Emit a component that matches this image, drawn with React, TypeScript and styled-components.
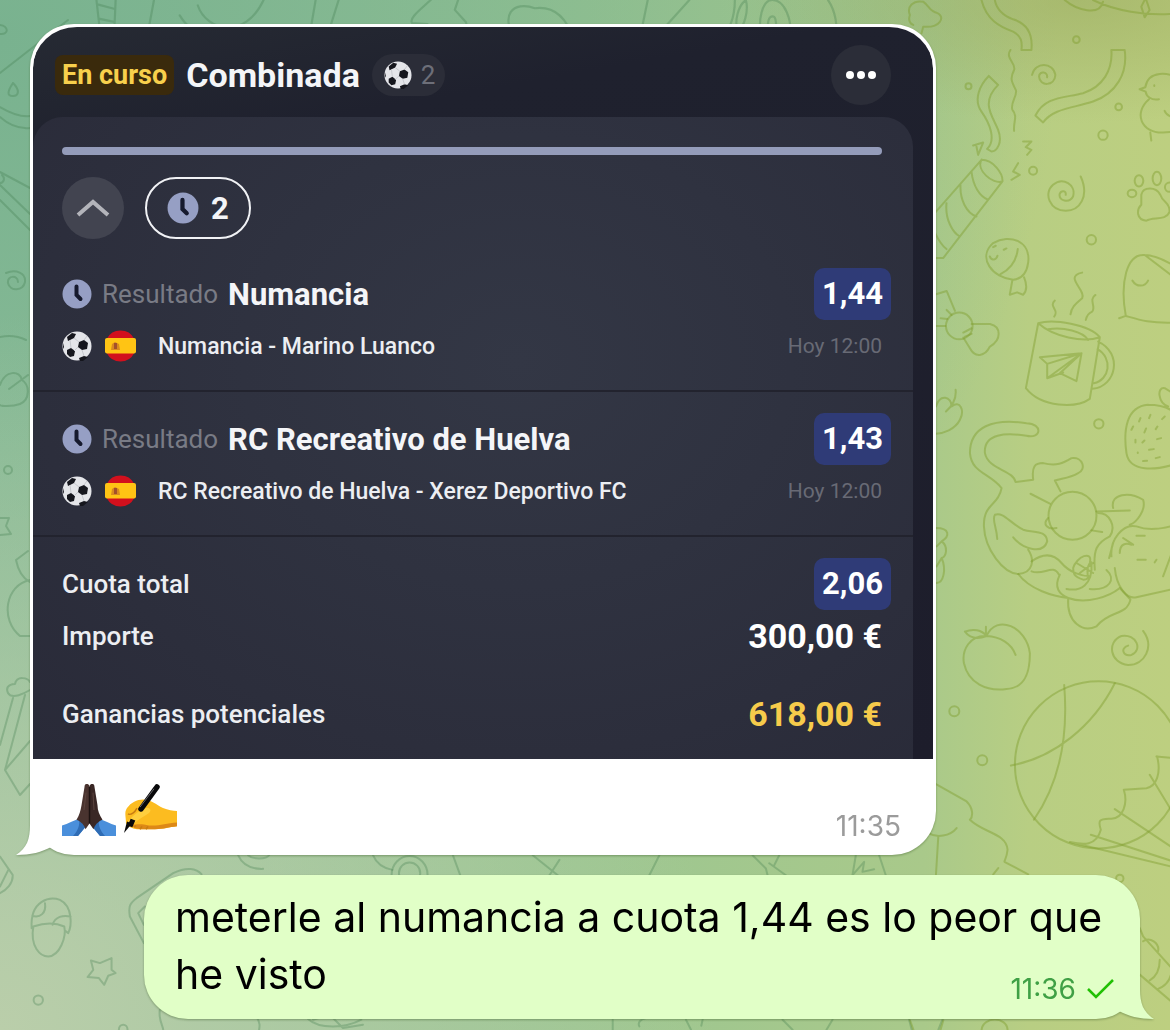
import React from "react";
import styled, { createGlobalStyle } from "styled-components";

const GlobalStyle = createGlobalStyle`
  *, *::before, *::after { box-sizing: border-box; }
  body { margin: 0; font-family: Inter, "Liberation Sans", sans-serif; }
  p, h2, ul, dl, dd { margin: 0; padding: 0; }
  button { border: 0; padding: 0; font: inherit; color: inherit; cursor: pointer; }
`;

const Chat = styled.main`
  position: relative;
  min-height: 100vh;
  overflow: hidden;
  padding: 24px 30px 11px;
  display: flex;
  flex-direction: column;
  gap: 20px;
  background:
    radial-gradient(ellipse 30% 12% at 92% 0%, rgba(150, 165, 90, 0.5) 0%, rgba(150, 165, 90, 0) 100%),
    radial-gradient(circle at 0% 100%, rgba(186, 206, 170, 1) 0%, rgba(186, 206, 170, 0) 46%),
    radial-gradient(ellipse at 0% 4%, #79b28f 0%, rgba(121, 178, 143, 0) 64%),
    linear-gradient(90deg, #93c19c 0%, #9cc691 50%, #a9c98a 79%, #b8ce83 88%, #bdcf80 100%);
`;

const Wallpaper = styled.svg`
  position: absolute;
  inset: 0;
  width: 100%;
  height: 100%;
  fill: none;
  stroke: #3f7a4c;
  stroke-opacity: 0.3;
  stroke-linecap: round;
  stroke-linejoin: round;
`;

const Bubble = styled.article<{ $own?: boolean }>`
  position: relative;
  border-radius: 44px;
  background: ${(p) => (p.$own ? "#e1ffc7" : "#ffffff")};
  margin: ${(p) => (p.$own ? "0 0 0 114px" : "0 204px 0 0")};
  filter: drop-shadow(0 1px 1px rgba(60, 90, 40, 0.45));
`;

const Tail = styled.svg<{ $own?: boolean }>`
  position: absolute;
  bottom: 0;
  ${(p) => (p.$own ? "right: -14px; transform: scaleX(-1);" : "left: -14px;")}
  width: 44px;
  height: 44px;
  fill: ${(p) => (p.$own ? "#e1ffc7" : "#ffffff")};
`;

const Slip = styled.section`
  margin: 0 3px;
  border-top: 3px solid transparent;
  background: linear-gradient(170deg, #262a33 0%, #1f212e 16%, #1d1d2b 100%) padding-box;
  border-radius: 44px 44px 0 0;
  overflow: hidden;
  color: #f4f5f8;
  font-family: Roboto, "Liberation Sans", sans-serif;
`;

const SlipHeader = styled.header`
  height: 90px;
  padding: 6px 42px 0 22px;
  display: flex;
  align-items: center;
`;

const Status = styled.span`
  padding: 0 7px;
  height: 40px;
  line-height: 40px;
  border-radius: 8px;
  background: #3a2a0c;
  color: #f8d04c;
  font-size: 27px;
  font-weight: 700;
`;

const Title = styled.h2`
  margin-left: 12px;
  font-size: 34px;
  line-height: 40px;
  font-weight: 700;
`;

const SportTag = styled.span`
  margin-left: 12px;
  height: 42px;
  padding: 0 10px 0 12px;
  display: flex;
  align-items: center;
  gap: 9px;
  border-radius: 21px;
  background: #2b2d38;
  color: #6d6f79;
  font-size: 26px;
`;

const RoundButton = styled.button<{ $size: number; $tone: string }>`
  width: ${(p) => p.$size}px;
  height: ${(p) => p.$size}px;
  flex: none;
  border-radius: 50%;
  display: grid;
  place-items: center;
  background: ${(p) => p.$tone};
`;

const MoreButton = styled(RoundButton)`
  margin-left: auto;
`;

const Panel = styled.div`
  margin-right: 20px;
  padding: 30px 0 19px;
  border-radius: 30px 30px 0 0;
  background: radial-gradient(ellipse at 55% 38%, #333745 0%, #2f3240 40%, #292a38 100%);
`;

const Progress = styled.div`
  height: 8px;
  margin: 0 31px 22px 29px;
  border-radius: 4px;
  background: #949cba;
`;

const Controls = styled.div`
  display: flex;
  gap: 21px;
  padding-left: 29px;
  margin-bottom: 8px;
`;

const PendingPill = styled.button`
  width: 106px;
  height: 62px;
  border-radius: 31px;
  border: 2px solid #f1f2f5;
  background: transparent;
  display: flex;
  align-items: center;
  justify-content: center;
  gap: 12px;
  font-size: 31px;
  font-weight: 700;
`;

const Legs = styled.ul`
  list-style: none;
`;

const Leg = styled.li`
  padding: 21px 22px 18px 29px;
  border-bottom: 2px solid #22232e;
`;

const Row = styled.div`
  height: 52px;
  display: flex;
  align-items: center;
`;

const Market = styled.span`
  margin: 0 10px;
  color: #797b85;
  font-size: 26px;
`;

const Pick = styled.span`
  font-size: 31px;
  font-weight: 700;
`;

const OddsBox = styled.span`
  margin-left: auto;
  height: 52px;
  line-height: 52px;
  padding: 0 8px;
  border-radius: 10px;
  background: #2f3b77;
  color: #ffffff;
  font-size: 31px;
  font-weight: 700;
`;

const Flag = styled.svg`
  margin: 0 22px 0 13px;
`;

const Fixture = styled.span`
  color: #eceef2;
  font-size: 23px;
  font-weight: 500;
`;

const Kickoff = styled.time`
  margin: 0 9px 0 auto;
  color: #686a75;
  font-size: 21px;
`;

const Totals = styled.dl`
  padding: 21px 22px 0 29px;
`;

const TotalRow = styled(Row)<{ $apart?: boolean }>`
  margin-top: ${(p) => (p.$apart ? 26 : 0)}px;
`;

const Label = styled.dt`
  color: #eceef2;
  font-size: 26px;
  font-weight: 500;
`;

const Figure = styled.dd`
  margin-left: auto;
  display: flex;
`;

const Amount = styled.span<{ $gold?: boolean }>`
  margin-right: 9px;
  font-size: 34px;
  font-weight: 700;
  color: ${(p) => (p.$gold ? "#f6cb4b" : "#ffffff")};
`;

const Caption = styled.div`
  height: 96px;
  padding: 0 35px 15px 32px;
  display: flex;
  justify-content: space-between;
  align-items: flex-end;
`;

const Emojis = styled.div`
  display: flex;
  gap: 7px;
  padding-bottom: 4px;
`;

const Meta = styled.div<{ $own?: boolean }>`
  display: flex;
  align-items: center;
  gap: 11px;
  font-size: 28px;
  line-height: 28px;
  color: ${(p) => (p.$own ? "#3fa045" : "#9b9b9b")};
`;

const Message = styled.div`
  display: flow-root;
  padding: 14px 26px 16px 31px;
  font-size: 41px;
  line-height: 57px;
  color: #000000;

  & > ${Meta} {
    float: right;
    margin-top: 29px;
  }
`;

const Ball = ({ size = 30 }: { size?: number }) => (
  <svg width={size} height={size} viewBox="0 0 30 30" aria-hidden="true">
    <circle cx="15" cy="15" r="14.5" fill="#e4e5e9" />
    <g fill="#15161d">
      <path d="M17 11l5-2 4 3-1 6-5 1-4-3z" />
      <path d="M5 19l4-2 4 3-1 5-4 1-3-3z" />
      <path d="M5 6l5-4 4 1-2 4-6 3z" />
      <path d="M17 27l5-2 4 1-5 4h-3z" />
      <path d="M1 12l1 4-1 2z" />
    </g>
    <path d="M12 7l5 4M16 16l-4 4M8 9l1 8M20 19l2 6M22 9l3-4" stroke="#c6c8ce" fill="none" />
  </svg>
);

const Clock = ({ size = 30 }: { size?: number }) => (
  <svg width={size} height={size} viewBox="0 0 30 30" aria-hidden="true">
    <circle cx="15" cy="15" r="14.5" fill="#969fc4" />
    <path d="M14.500 7.500v8.500l4 4" stroke="#161a2e" strokeWidth="4" strokeLinecap="round" fill="none" />
  </svg>
);

const SpainFlag = () => (
  <Flag width="31" height="32" viewBox="0 0 31 32" role="img" aria-label="España">
    <path d="M1.700 9a15.500 15.500 0 0 1 27.600 0z" fill="#d2101d" />
    <path d="M1.700 23a15.500 15.500 0 0 0 27.600 0z" fill="#d2101d" />
    <rect x="0" y="8" width="31" height="15.500" rx="2" fill="#ffc414" />
    <path d="M7 14l3-2 4 2 1 6H6z" fill="#d98a1e" />
    <path d="M9 13h3v6H9z" fill="#a3502a" />
  </Flag>
);

const PrayingHands = () => (
  <svg width="54" height="52" viewBox="0 0 54 54" preserveAspectRatio="none" role="img" aria-label="Manos juntas">
    <path d="M0 43c6-2 12-5 17-7l7 8-8 10H0z" fill="#4a8fdb" />
    <path d="M54 43c-6-2-12-5-17-7l-7 8 8 10h16z" fill="#4a8fdb" />
    <path d="M17 36l7 8-8 10h-5c5-6 7-11 6-18zM37 36l-7 8 8 10h5c-5-6-7-11-6-18z" fill="#2f6cb4" />
    <path d="M27.500 2c-1-3-5-3-5 1l-3 19c-1 6-2 10-5 15 5 2 8 6 9 10l4-6z" fill="#49332f" />
    <path d="M27.500 2c1-3 5-3 5 1l3 19c0 6 2 10 5 15-5 2-8 6-9 10l-4-6z" fill="#3a2725" />
    <path d="M27.500 3v38" stroke="#1d1211" strokeWidth="1.500" />
    <path d="M24 9l-2 18M31 9l1 18" stroke="#5c443e" fill="none" />
  </svg>
);

const WritingHand = () => (
  <svg width="54" height="52" viewBox="0 0 54 54" preserveAspectRatio="none" role="img" aria-label="Mano escribiendo">
    <path d="M3 41c0-8-2-11 1-16 4-6 10-9 16-9 8 0 13 5 20 9 5 2 10 3 14 3v16c-8 1-12 3-22 3H17c-7 0-11-2-14-6z" fill="#fcbc20" />
    <path d="M9 43c3 4 9 4 14 4h9c9 0 13-2 22-3v-4c-11 1-19 4-28 3-6-1-11-2-17 0z" fill="#dd8917" />
    <path d="M5 31c3 2 7-2 9-6M11 45l2-2M17 47l2-3M23 47l2-3" stroke="#c87d13" strokeWidth="1.500" fill="none" />
    <path d="M5 39c7-9 13-12 18-14 4-1 6 2 3 5-5 4-10 6-14 10-3 3-6 3-7-1z" fill="#ffcf3e" />
    <path d="M34 3L18 26" stroke="#08080a" strokeWidth="5.500" strokeLinecap="round" />
    <path d="M10 37L7 44" stroke="#08080a" strokeWidth="5" />
    <path d="M9 41L1 51l3-12z" fill="#08080a" />
    <path d="M31 5L17 24" stroke="#6b6b70" strokeWidth="1" />
  </svg>
);

const TailShape = ({ own }: { own?: boolean }) => (
  <Tail $own={own} viewBox="0 0 44 44" aria-hidden="true">
    <path d="M14 0v14C14 28 11 37 0 44c15 0 26-3 35-8L30 10z" />
  </Tail>
);

const OLIVE = "#7c9a28";

const Doodles = () => (
  <Wallpaper viewBox="0 0 1170 1030" preserveAspectRatio="xMaxYMin slice" aria-hidden="true">
    {/* top edge */}
    <g transform="translate(80 0) scale(.548)" strokeWidth="4">
      <path d="M30 0l8 70M65 0l-3 70M32 8l30 8M34 34l28 6M36 58l26 4M135 0l-13 70M126 45l24 25M182 28c18 30 40 38 68 27M215 10C230 55 300 75 335 0M430 0l-12 70M472 0l-22 70" />
      <path d="M640 0c-22 20-40 34-34 42l28 2-4 26M690 0l-6 18 20 22c6 14-14 14-28 10l-20 20M795 70C765 30 790 0 830 15c40-5 60 25 70 55M825 70c0-30 40-30 50 0M1036 0l-14 68 20-14 14 8L1112 0M1165 70c20-8 30-40 30-70M1215 0c6 20-4 50-14 58-8-18 0-48 14-58M1245 70c-10-30 0-70 18-70 24 0 36 36 34 70M1257 60c-4-20 0-30 7-30s8 20 4 34M1365 0c14 20 18 50 14 70" />
    </g>
    {/* left edge */}
    <g strokeWidth="2">
      <path d="M0 73L68 20M0 25c9 1 9 10 0 9M13 83c-6 9-6 13 0 13s7-6 0-13M0 107c10 6 20 10 30 9M0 117c10 9 20 12 30 11M0 172l30 16M0 185l30 29M0 200l30 30M2 175c4 4 1 8-2 8" />
      <path d="M6 273c10-4 20 0 19 9-2 9-15 10-17 1-1-8 10-8 10-1M0 337c10-2 18-1 26 3M0 385c5-15 20-15 22-5 8 5 8 20-2 24-8 3-20 2-20 1M9 389l19-14" />
      <circle cx="8" cy="470" r="4" />
      <path d="M0 518l9 0-3 8 5 8-11 1M30 580C5 585 0 620 20 636h10M28 551l-12 9c2 10 6 18 14 22M8 693c-4-9 7-9 7-9 2-9 13-6 15-2M8 693c4 7 17 0 22-3M13 698L0 745M25 695L5 770l15 25 10-11M5 770l25-29" />
    </g>
    {/* below the photo */}
    <g transform="translate(0 740) scale(.333)" strokeWidth="6">
      <path d="M95 565C90 480 150 470 180 480c40 20 35 80 25 100l-10-8M100 560c-10 60 20 90 45 90 35-2 55-60 48-90-33-15-63-10-93 0M135 490c5 30-15 45-38 38M158 555c7-25 32-30 54-25" />
      <path d="M335 655v35l12 10-22 8-12 27-16-20-34-3 17-22-7-28 27 8z" />
      <circle cx="115" cy="781" r="14" />
      <path d="M432 610l-42-80c-5-30 0-40 20-55l110-75c40-20 70-15 85 3M432 555l-17-35 20-20M0 350l38 55c2 25-18 45-38 55M0 440l25-50M715 346c15 34 45 42 75 41M745 346c15 14 55 12 63 0M1120 346c10 24 30 39 58 44M480 810c-5 30 10 50 10 60M770 830c12 20 10 30 8 40M925 838c35 32 115 27 160 2M940 840l50-15 40 40 60-10M357 870c0-20 26-20 26 0" />
      <ellipse cx="1230" cy="405" rx="54" ry="57" />
      <circle cx="1230" cy="400" r="32" />
      <path d="M1360 346l22 60M1600 346l75 60M1680 360l-30 46M1980 346l-30 60M2260 346l40 40 5 20M2310 370l50 36M2340 346l-15 30M2570 346l-10 60 35-40-5 30 35-8M2640 346l20 60M1920 860c-5-10 0-20 20-25" />
      <path d="M1840 840v30M2060 840l15 30M2110 840l-4 18M2350 840l30 30M2500 840l-18 30M2730 840l8 30M2830 840l-12 30" />
    </g>
    {/* upper right */}
    <g transform="translate(780 0) scale(.333)" strokeWidth="6" stroke={OLIVE} strokeOpacity=".42">
      <path d="M425 100l5-20c50 5 70-30 40-42-20-3-20-18-40-33-30-5-50 15-40 40-5 15 0 25 10 30M855 0c35 30 105 50 115 5M940 0c60 30 160 50 250 40M1095 0l-10 20 10 32 15-22-10-30" />
      <path d="M605 0c15 60 55 80 95 95 25 13 28 30 25 55h30c5-50-15-80-55-92-35-13-50-33-55-58M692 150c-17 25 18 40 11 60-13 25-8 35 5 60 7 15-18 40-10 60 17 20 2 35 5 63" />
      <path d="M627 228l28 27c-55 55-15 95 0 135 15 40-5 65-20 65l-13-8c28-27 8-77-17-112-25-35-5-80 22-107M757 225c8-40 63-40 70 0-2 35-47 35-49 5 0-18 27-15 24 2M995 150h40c10 70-25 130-95 155-60 20-120 20-150 63l-23-21c28-57 83-52 143-67 60-20 90-70 85-130" />
      <path d="M1080 268l17-6c8-52 73-47 103-22M1080 268l18 7c2 15 17 27 40 23M1108 298c-48 42-23 102 42 100l50-3M1112 398l3 24M1155 333c5 12 15 17 25 17M1124 256v2M580 437l30-9-15 37-5-25M730 425h25l-17 17 17 8-13 15M695 540l25-15-20-10 15-25" />
      <path d="M605 480L460 645M668 545L490 775h-24M605 480c35 0 65 40 63 65-30 10-80-35-63-65M575 515c5 45 25 75 50 85M542 555c-2 45 18 85 48 95M500 610c-5 50 20 90 40 100M466 700c14 30 24 40 34 48" />
      <path d="M903 530c27 60-3 103-45 103-48 0-68-53-38-78 30-25 70 0 60 35-10 20-45 15-40-8 5-12 20-10 18 3M1085 585c5-25 45-25 57 0 8 25 28 20 28 50-10 30-50 15-70 28-30-3-30-33-15-48z" />
      <ellipse cx="1078" cy="543" rx="13" ry="17" />
      <ellipse cx="1132" cy="536" rx="13" ry="20" />
      <ellipse cx="1057" cy="581" rx="13" ry="11" />
      <ellipse cx="1170" cy="562" rx="14" ry="14" />
      <circle cx="890" cy="119" r="10" />
      <circle cx="566" cy="259" r="9" />
      <circle cx="1017" cy="321" r="10" />
      <circle cx="970" cy="406" r="14" />
      <circle cx="760" cy="513" r="12" />
      <circle cx="935" cy="720" r="14" />
      <path d="M640 730c50-30 115-5 105 60-5 35-25 48-45 50-60-5-110-65-60-110M714 748c-5 42-25 62-52 75M698 840l-8 45 22-7 18 7c15-15 10-35 3-52M630 770c5 15 20 10 23-2M672 750l8-4M640 742l8-4" />
    </g>
    {/* middle right */}
    <g transform="translate(910 240) scale(.333)" strokeWidth="6" stroke={OLIVE} strokeOpacity=".42">
      <path d="M78 163l32-10 25 60M78 258h28M185 252h55c35 8 35 48 0 68-15 30-45 35-60 5l-20-32M160 278l25-13M165 290l20-8M92 235l20 2M110 210l15 15" />
      <circle cx="148" cy="258" r="40" />
      <path d="M435 182c-20 18 15 28-2 48M517 98c-57 12 13 52 0 77-17 15-32 25-35 48M557 165c-22 15 3 35-10 50-12 5-17 15-19 25" />
      <path d="M385 250l-37 195c47 60 152 60 192 32l30-185c-30-37-140-57-185-42 45 40 135 60 185 42M415 268c45-8 105 7 120 32M565 305c75 35 55 135-17 142M563 328c47 27 37 92-11 102M390 352l125-12-15 84-50-24 65-60-103 75v-43zM412 372l103-32M412 415l48-17" />
      <path d="M628 235l20-7C630 130 650 40 705 45c35 0 65 20 85 30M705 45l85 65M648 228c42 12 72 22 142 20M668 122c12 20 37 20 47 0M78 500c12-40 47-30 47 0 25-20 40 10 25 40-15 30-50 40-72 42M137 450c3 30-12 50-29 65" />
      <circle cx="567" cy="552" r="14" />
      <path d="M715 495c-65 5-75 75-65 145 10 60 90 50 140 35M715 495c25 0 55 5 75 20M775 500c-30-10-35-60-10-55l25 15M692 535l-4 10M722 525l-4 10M665 570l5-10M704 578l5-12M738 568l5-8M677 608v-8M698 608l6-6M742 598l12-3M684 640v-2M718 630l14-2M700 664l12-1M738 655l12-3M765 530l-8 8" />
      <path d="M350 588c45 10 50-36 0-38-100-15-170 10-170 90 5 60 60 60 95 105-10 55-55 45-53 115 3 70 58 140 103 143 45-3 50-43 30-73M350 588c-60-10-130-8-125 52 10 50 85 50 92 87l53-7c-5-40 5-50 30-50 40 10 60 0 85-15 35-5 45 35 20 45-25 15-45 15-70 22l17 33M362 762l58 30M310 893c30 37 90 52 102 12-2-35-42-25-72-35-40-20-60-55-85-45-10 15 5 35 7 73" />
      <circle cx="488" cy="828" r="72" />
      <path d="M415 835c-20 20 0 35 25 30M325 1003c35 47 105 67 150 72 55 20 125-5 155-30M365 965c35-25 65-25 90 5 25 30 65 40 85 40M365 995c35 15 65-25 82 10M450 1005c-20 40 0 60 25 70M475 1075c-5 75 45 105 85 85 40-50 90-30 102-80l-32-35M490 985c10-35 60-55 50-15-20 30 10 50-20 50-30-10-30-20-30-35M470 1048c40 8 80-10 75-80M540 1048c60 5 80-30 50-57M510 1000l40-30M500 970l50 30" />
      <path d="M605 950c-5-50 35-100 75-90 40 15 80 5 110-2M615 985c5 55 35 95 65 88l110-25M560 815l100-3M610 805c-10-45 50-50 90-25 10 30-20 70-40 75M565 820c35 0 55 40 35 70-40 20-50 40-45 100M545 872l32 5M598 955l12-45M680 888h25M683 960h25M735 968l5-8M640 895l30 20M630 940c0-30 20-30 35-25M790 930l-30 80" />
      <path d="M78 865c42 0 42 25 17 40 20 15 15 45 0 50 15 35 5 75-15 75M80 920l15-15M80 980l15-25" />
    </g>
    {/* lower right */}
    <g transform="translate(910 600) scale(.333)" strokeWidth="6" stroke={OLIVE} strokeOpacity=".42">
      <path d="M230 108c-50-3-75 42-68 82 13 60 68 85 128 77 55-2 70-47 70-107-10-80-100-120-130-52 40 2 75 22 87 57M165 95c25-10 50-5 65 13-30 12-50 7-65-13M228 80v28M700 93c35 47 5 102-45 102-55-5-65-70-20-87 45-8 65 42 30 57-25 5-35-20-10-28" />
      <circle cx="133" cy="334" r="15" />
      <circle cx="217" cy="481" r="15" />
      <circle cx="630" cy="836" r="11" />
      <circle cx="566" cy="495" r="251" />
      <path d="M463 255c12 145-8 285-91 405M303 497c127-22 247-117 312-247M740 470l50 5M742 470c13 50-2 90-32 95l-68 5c13 40-2 85-37 87-40-2-40 8-32 33-13 50-53 45-93 37l310 75M720 525l70 115M615 628l175 117M543 705l247 80" />
      <path d="M78 553l92 52c20 20 20 45 10 55 40 40 110 40 113 90-3 30-13 35-8 37l70 37M55 700c25 15 65 10 85-15M85 710l-7 114M250 824l15-19M690 985l10 25 90 100M700 1025c20-15 50 5 45 30M690 1125l100 85M750 1080c0 30-10 50-30 62M785 1120c-5 25-20 40-40 48M215 1290c5-40 75-40 78 0M100 1262l-8 28M0 1262l10 28" />
    </g>
  </Wallpaper>
);

const legs = [
  { pick: "Numancia", odds: "1,44", fixture: "Numancia - Marino Luanco", when: "Hoy 12:00" },
  { pick: "RC Recreativo de Huelva", odds: "1,43", fixture: "RC Recreativo de Huelva - Xerez Deportivo FC", when: "Hoy 12:00" },
];

export default function App() {
  return (
    <>
      <GlobalStyle />
      <Chat>
        <Doodles />
        <Bubble>
          <TailShape />
          <Slip>
            <SlipHeader>
              <Status>En curso</Status>
              <Title>Combinada</Title>
              <SportTag>
                <Ball size={28} />2
              </SportTag>
              <MoreButton $size={60} $tone="#2b2d38" aria-label="Más opciones">
                <svg width="32" height="10" viewBox="0 0 32 10" fill="#ffffff" aria-hidden="true">
                  <circle cx="5" cy="5" r="4" />
                  <circle cx="16" cy="5" r="4" />
                  <circle cx="27" cy="5" r="4" />
                </svg>
              </MoreButton>
            </SlipHeader>
            <Panel>
              <Progress />
              <Controls>
                <RoundButton $size={62} $tone="#424450" aria-label="Contraer">
                  <svg width="34" height="20" viewBox="0 0 34 20" fill="none" stroke="#b3b4ba" strokeWidth="4" aria-hidden="true">
                    <path d="M2 17L17 4l15 13" />
                  </svg>
                </RoundButton>
                <PendingPill>
                  <Clock size={32} />2
                </PendingPill>
              </Controls>
              <Legs>
                {legs.map((leg) => (
                  <Leg key={leg.pick}>
                    <Row>
                      <Clock />
                      <Market>Resultado</Market>
                      <Pick>{leg.pick}</Pick>
                      <OddsBox>{leg.odds}</OddsBox>
                    </Row>
                    <Row>
                      <Ball />
                      <SpainFlag />
                      <Fixture>{leg.fixture}</Fixture>
                      <Kickoff>{leg.when}</Kickoff>
                    </Row>
                  </Leg>
                ))}
              </Legs>
              <Totals>
                <TotalRow>
                  <Label>Cuota total</Label>
                  <Figure><OddsBox>2,06</OddsBox></Figure>
                </TotalRow>
                <TotalRow>
                  <Label>Importe</Label>
                  <Figure><Amount>300,00 €</Amount></Figure>
                </TotalRow>
                <TotalRow $apart>
                  <Label>Ganancias potenciales</Label>
                  <Figure><Amount $gold>618,00 €</Amount></Figure>
                </TotalRow>
              </Totals>
            </Panel>
          </Slip>
          <Caption>
            <Emojis>
              <PrayingHands />
              <WritingHand />
            </Emojis>
            <Meta><time>11:35</time></Meta>
          </Caption>
        </Bubble>
        <Bubble $own>
          <TailShape own />
          <Message>
            <span>meterle al numancia a cuota 1,44 es lo peor que he visto</span>
            <Meta $own>
              <time>11:36</time>
              <svg width="27" height="22" viewBox="0 0 27 22" fill="none" stroke="#21c004" strokeWidth="2.500" role="img" aria-label="Enviado">
                <path d="M1 11l8 8L26 2" />
              </svg>
            </Meta>
          </Message>
        </Bubble>
      </Chat>
    </>
  );
}
